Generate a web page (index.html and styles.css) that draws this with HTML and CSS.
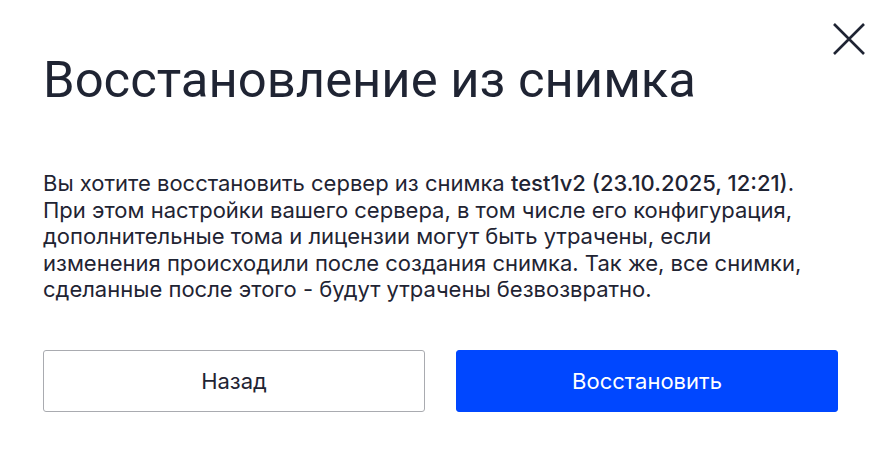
FILE: index.html
```html
<!DOCTYPE html>
<html lang="ru">
<head>
<meta charset="utf-8">
<link rel="stylesheet" href="styles.css">
</head>
<body>
<div class="modal">
  <button class="close" aria-label="Закрыть">
    <svg width="34" height="34" viewBox="0 0 34 34"><path d="M2 2L32 32M32 2L2 32" stroke="#1f2433" stroke-width="2.6" fill="none"/></svg>
  </button>
  <h1 class="title">Восстановление из снимка</h1>
  <p class="text">Вы хотите восстановить сервер из снимка <span class="em">test1v2 (23.10.2025, 12:21)</span>.<br>При этом настройки вашего сервера, в том числе его конфигурация, дополнительные тома и лицензии могут быть утрачены, если изменения происходили после создания снимка. Так же, все снимки, сделанные после этого - будут утрачены безвозвратно.</p>
  <div class="actions">
    <button class="btn btn-secondary">Назад</button>
    <button class="btn btn-primary">Восстановить</button>
  </div>
</div>
</body>
</html>
```
FILE: styles.css
```css
html, body {
  margin: 0;
  padding: 0;
  background: #ffffff;
}
.modal {
  position: relative;
  width: 885px;
  height: 460px;
  box-sizing: border-box;
  padding: 48px 47px 0 43px;
  font-family: Inter, "Noto Sans", sans-serif;
  color: #1f2433;
}
.close {
  position: absolute;
  top: 22px;
  right: 19px;
  padding: 0;
  border: 0;
  background: none;
  width: 34px;
  height: 34px;
}
.title {
  margin: 0;
  font-family: Roboto, sans-serif;
  font-weight: 400;
  font-size: 50.8px;
  line-height: 64px;
  color: #1f2433;
  letter-spacing: 0;
}
.text {
  margin: 58px 0 0;
  font-size: 22px;
  line-height: 26.5px;
  max-width: 770px;
}
.em {
  font-weight: 500;
}
.actions {
  display: grid;
  grid-template-columns: 1fr 1fr;
  gap: 31px;
  margin-top: 47px;
  width: 795px;
}
.btn {
  height: 62px;
  border-radius: 3px;
  font-family: Inter, sans-serif;
  font-size: 22px;
  cursor: pointer;
}
.btn-secondary {
  background: #fff;
  border: 1px solid #a9abb0;
  color: #1f2433;
}
.btn-primary {
  background: #0047ff;
  border: 1px solid #0047ff;
  color: #fff;
}
```
